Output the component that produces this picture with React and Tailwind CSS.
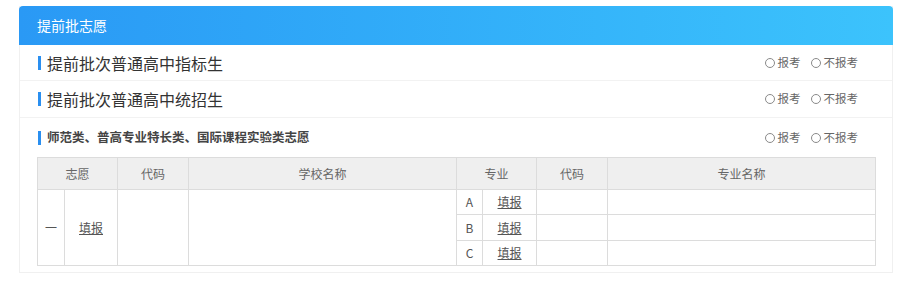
import { useState } from 'react'

const font = { fontFamily: '"Noto Sans CJK SC", "Microsoft YaHei", sans-serif' }

function Radio({ label, checked, onClick }) {
  return (
    <label className="flex items-center gap-[3px] cursor-pointer" onClick={onClick}>
      <span className="w-[10px] h-[10px] rounded-full border border-[#8a8a8a] bg-white flex items-center justify-center">
        {checked && <span className="w-[4px] h-[4px] rounded-full bg-[#2a9af5]"></span>}
      </span>
      <span>{label}</span>
    </label>
  )
}

function Choice() {
  const [v, setV] = useState(null)
  return (
    <div className="flex items-center gap-[10px] text-[11.5px] text-[#666]">
      <Radio label="报考" checked={v === 1} onClick={() => setV(1)} />
      <Radio label="不报考" checked={v === 2} onClick={() => setV(2)} />
    </div>
  )
}

function Bar() {
  return <span className="w-[3px] h-[14px] bg-[#2a8ff0] mr-[6px]"></span>
}

export default function App() {
  const th = 'border border-[#dcdcdc] font-normal text-[12px] text-[#666] h-[32px]'
  const td = 'border border-[#dcdcdc] text-[12px] text-[#555] text-center'
  const link = <a className="underline text-[#555] cursor-pointer">填报</a>
  return (
    <div className="bg-white w-[917px] h-[288px] pt-[6px] pl-[19px]" style={font}>
      <div className="w-[874px] border-x border-b border-[#f0f0f0] pb-[6px]">
        <div className="h-[39px] -mx-px rounded-t-[4px] bg-gradient-to-r from-[#2a99f5] to-[#3cc3fc] px-[18px] flex items-center text-white text-[14px]">
          提前批志愿
        </div>
        <div className="h-[36px] border-b border-[#f2f2f2] flex items-center justify-between pl-[18px] pr-[34px]">
          <div className="flex items-center text-[16px] text-[#333]"><Bar />提前批次普通高中指标生</div>
          <Choice />
        </div>
        <div className="h-[37px] border-b border-[#f2f2f2] flex items-center justify-between pl-[18px] pr-[34px]">
          <div className="flex items-center text-[16px] text-[#333]"><Bar />提前批次普通高中统招生</div>
          <Choice />
        </div>
        <div className="h-[39px] flex items-center justify-between pl-[18px] pr-[34px]">
          <div className="flex items-center text-[12.5px] font-bold text-[#444]"><Bar />师范类、普高专业特长类、国际课程实验类志愿</div>
          <Choice />
        </div>
        <div className="px-[17px]">
          <table className="w-[838px] border-collapse table-fixed">
            <colgroup>
              <col className="w-[27px]" /><col className="w-[53px]" /><col className="w-[71px]" /><col className="w-[268px]" />
              <col className="w-[26px]" /><col className="w-[54px]" /><col className="w-[71px]" /><col className="w-[268px]" />
            </colgroup>
            <thead>
              <tr className="bg-[#efefef]">
                <th colSpan={2} className={th}>志愿</th>
                <th className={th}>代码</th>
                <th className={th}>学校名称</th>
                <th colSpan={2} className={th}>专业</th>
                <th className={th}>代码</th>
                <th className={th}>专业名称</th>
              </tr>
            </thead>
            <tbody>
              {['A', 'B', 'C'].map((l, i) => (
                <tr key={l} className={i === 1 ? 'h-[26px]' : 'h-[25px]'}>
                  {i === 0 && (
                    <>
                      <td rowSpan={3} className={td}>一</td>
                      <td rowSpan={3} className={td}>{link}</td>
                      <td rowSpan={3} className={td}></td>
                      <td rowSpan={3} className={td}></td>
                    </>
                  )}
                  <td className={td}>{l}</td>
                  <td className={td}>{link}</td>
                  <td className={td}></td>
                  <td className={td}></td>
                </tr>
              ))}
            </tbody>
          </table>
        </div>
      </div>
    </div>
  )
}
